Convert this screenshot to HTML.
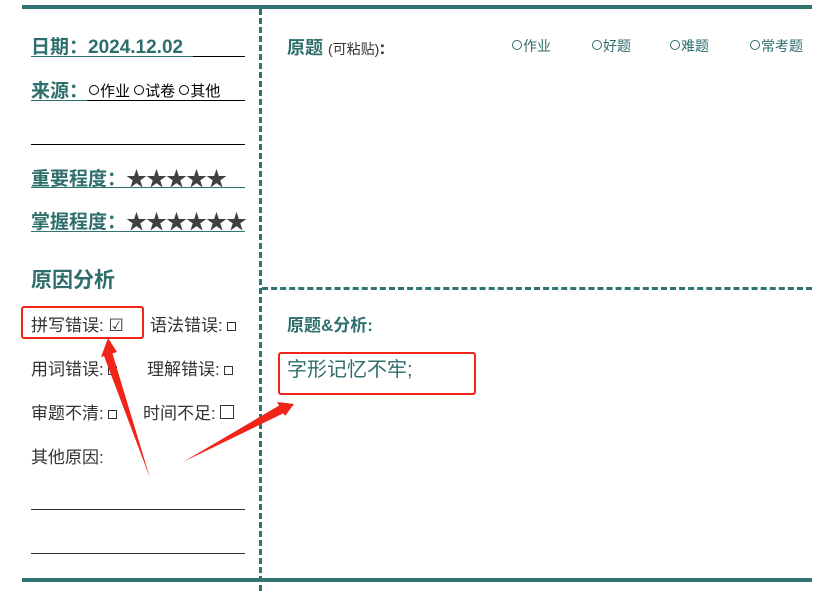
<!DOCTYPE html>
<html><head><meta charset="utf-8"><style>
body{margin:0;width:839px;height:591px;background:#fff;position:relative;overflow:hidden;font-family:"Liberation Sans","Noto Sans CJK SC",sans-serif;}
.a{position:absolute;white-space:nowrap;}
.t{color:#2e6f6c;font-weight:bold;}
.g{color:#333;font-size:17px;}
.box{display:inline-block;border:1px solid #333;background:#fff;}
.c{display:inline-block;width:8px;height:8px;border:1px solid currentColor;border-radius:50%;margin-right:1px;vertical-align:1px;}
</style></head><body>
<div class="a" style="left:22px;top:5px;width:790px;height:4px;background:#2f7471"></div>
<div class="a" style="left:22px;top:578px;width:790px;height:4px;background:#2f7471"></div>
<div class="a" style="left:259px;top:9px;width:0;height:582px;border-left:3px dashed #2f7471"></div>
<div class="a" style="left:262px;top:287px;width:550px;height:0;border-top:3px dashed #2f7471"></div>

<div class="a t" style="left:31px;top:32px;font-size:19px;">日期：2024.12.02</div>
<div class="a" style="left:31px;top:56px;width:162px;height:1px;background:#2f7471"></div>
<div class="a" style="left:193px;top:56px;width:52px;height:1px;background:#000"></div>

<div class="a t" style="left:31px;top:76px;font-size:19px;">来源：</div>
<div class="a" style="left:89px;top:80px;font-size:15px;color:#000"><span class="c"></span>作业 <span class="c"></span>试卷 <span class="c"></span>其他</div>
<div class="a" style="left:31px;top:100px;width:56px;height:1px;background:#2f7471"></div>
<div class="a" style="left:87px;top:100px;width:158px;height:1px;background:#000"></div>
<div class="a" style="left:31px;top:144px;width:214px;height:1px;background:#000"></div>

<div class="a t" style="left:31px;top:164px;font-size:19px;">重要程度：</div>
<div class="a" style="left:126px;top:163px;font-size:21px;color:#404040;letter-spacing:-1px">★★★★★</div>
<div class="a" style="left:31px;top:187px;width:214px;height:1px;background:#2f7471"></div>
<div class="a t" style="left:31px;top:207px;font-size:19px;">掌握程度：</div>
<div class="a" style="left:126px;top:206px;font-size:21px;color:#404040;letter-spacing:-1px">★★★★★★</div>
<div class="a" style="left:31px;top:231px;width:214px;height:1px;background:#2f7471"></div>

<div class="a t" style="left:31px;top:264px;font-size:21px;">原因分析</div>
<div class="a g" style="left:31px;top:311px;">拼写错误: <span style="font-size:17px">☑</span></div>
<div class="a g" style="left:150px;top:311px;">语法错误: <span class="box" style="width:7px;height:7px"></span></div>
<div class="a g" style="left:31px;top:355px;">用词错误: <span class="box" style="width:7px;height:7px"></span></div>
<div class="a g" style="left:147px;top:355px;">理解错误: <span class="box" style="width:7px;height:7px"></span></div>
<div class="a g" style="left:31px;top:399px;">审题不清: <span class="box" style="width:7px;height:7px"></span></div>
<div class="a g" style="left:143px;top:399px;">时间不足: <span class="box" style="width:12px;height:12px"></span></div>
<div class="a g" style="left:31px;top:443px;">其他原因:</div>
<div class="a" style="left:31px;top:509px;width:214px;height:1px;background:#333"></div>
<div class="a" style="left:31px;top:553px;width:214px;height:1px;background:#333"></div>

<div class="a t" style="left:287px;top:34px;font-size:18px;">原题 <span style="font-size:14px;color:#333;font-weight:normal">(可粘贴)</span><span style="color:#333">:</span></div>
<div class="a" style="left:512px;top:36px;font-size:14px;color:#2e6f6c"><span class="c"></span>作业</div>
<div class="a" style="left:592px;top:36px;font-size:14px;color:#2e6f6c"><span class="c"></span>好题</div>
<div class="a" style="left:670px;top:36px;font-size:14px;color:#2e6f6c"><span class="c"></span>难题</div>
<div class="a" style="left:750px;top:36px;font-size:14px;color:#2e6f6c"><span class="c"></span>常考题</div>

<div class="a t" style="left:287px;top:311px;font-size:17px;">原题&amp;分析:</div>
<div class="a" style="left:287px;top:353px;font-size:20px;color:#2e6f6c">字形记忆不牢;</div>

<div class="a" style="left:21px;top:306px;width:119px;height:29px;border:2px solid #f02418;border-radius:3px"></div>
<div class="a" style="left:278px;top:352px;width:194px;height:39px;border:2px solid #f02418;border-radius:3px"></div>

<svg class="a" style="left:0;top:0" width="839" height="591">
<polygon points="150,478 104,356 112,352" fill="#f02418"/>
<polygon points="101,357 108,338 117,352" fill="#f02418"/>
<polygon points="183,462 280,405 284,413" fill="#f02418"/>
<polygon points="277,402 294,404 285,416" fill="#f02418"/>
</svg>
</body></html>
